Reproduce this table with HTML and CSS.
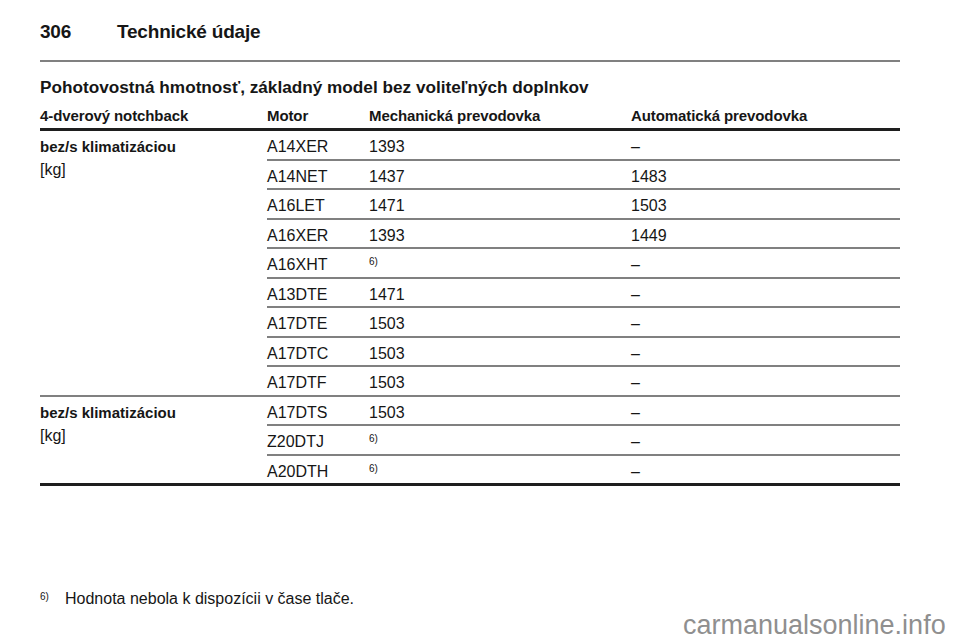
FILE: index.html
```html
<!DOCTYPE html>
<html lang="sk">
<head>
<meta charset="utf-8">
<title>306 Technické údaje</title>
<link rel="stylesheet" href="styles.css">
</head>
<body>
<div class="page">
  <header class="pagehead">
    <span class="pno">306</span>
    <span class="ptitle">Technické údaje</span>
  </header>
  <div class="rule"></div>
  <h2 class="section">Pohotovostná hmotnosť, základný model bez voliteľných doplnkov</h2>

  <div class="thead">
    <div>4-dverový notchback</div>
    <div>Motor</div>
    <div>Mechanická prevodovka</div>
    <div>Automatická prevodovka</div>
  </div>

  <div class="group">
    <div class="label"><div class="lb">bez/s klimatizáciou</div><div class="unit">[kg]</div></div>
    <div class="rows">
      <div class="row"><div>A14XER</div><div>1393</div><div>–</div></div>
      <div class="row"><div>A14NET</div><div>1437</div><div>1483</div></div>
      <div class="row"><div>A16LET</div><div>1471</div><div>1503</div></div>
      <div class="row"><div>A16XER</div><div>1393</div><div>1449</div></div>
      <div class="row"><div>A16XHT</div><div><sup class="fn">6)</sup></div><div>–</div></div>
      <div class="row"><div>A13DTE</div><div>1471</div><div>–</div></div>
      <div class="row"><div>A17DTE</div><div>1503</div><div>–</div></div>
      <div class="row"><div>A17DTC</div><div>1503</div><div>–</div></div>
      <div class="row"><div>A17DTF</div><div>1503</div><div>–</div></div>
    </div>
  </div>

  <div class="group last">
    <div class="label"><div class="lb">bez/s klimatizáciou</div><div class="unit">[kg]</div></div>
    <div class="rows">
      <div class="row"><div>A17DTS</div><div>1503</div><div>–</div></div>
      <div class="row"><div>Z20DTJ</div><div><sup class="fn">6)</sup></div><div>–</div></div>
      <div class="row"><div>A20DTH</div><div><sup class="fn">6)</sup></div><div>–</div></div>
    </div>
  </div>

  <div class="footnote">
    <sup class="fnmark">6)</sup>
    <span>Hodnota nebola k dispozícii v čase tlače.</span>
  </div>
</div>
<div class="watermark">carmanualsonline.info</div>
</body>
</html>
```

FILE: styles.css
```css
html, body {
  margin: 0;
  padding: 0;
  background: #ffffff;
}
body {
  font-family: "Liberation Sans", Arial, Helvetica, sans-serif;
  color: #161616;
  width: 960px;
  height: 642px;
  position: relative;
  overflow: hidden;
}
.page {
  padding-left: 40px;
  width: 860px;
}
.pagehead {
  display: flex;
  margin-top: 20px;
  height: 24px;
  line-height: 24px;
  font-size: 19px;
  font-weight: bold;
  letter-spacing: -0.2px;
}
.pno {
  width: 77px;
}
.rule {
  margin-top: 16px;
  height: 2px;
  background: #808080;
}
.section {
  margin: 14px 0 0 0;
  font-size: 17.2px;
  line-height: 22px;
  font-weight: bold;
}
.thead,
.row {
  display: grid;
  line-height: 18px;
}
.thead {
  grid-template-columns: 227px 102px 262px 1fr;
  margin-top: 9px;
  padding-bottom: 3px;
  border-bottom: 3px solid #1e1e1e;
  font-size: 15px;
  font-weight: bold;
  letter-spacing: -0.1px;
}
.group {
  display: flex;
  border-bottom: 2px solid #808080;
}
.group.last {
  border-bottom: 3px solid #1e1e1e;
}
.label {
  width: 227px;
  padding-top: 7px;
  line-height: 18px;
}
.lb {
  font-size: 15px;
  font-weight: bold;
}
.unit {
  margin-top: 5px;
  font-size: 16px;
}
.rows {
  flex: 1;
}
.row {
  grid-template-columns: 102px 262px 1fr;
  font-size: 16px;
  align-content: start;
  padding-top: 7px;
  height: 20.5px;
  border-bottom: 2px solid #808080;
}
.row:last-child {
  border-bottom: none;
}
.fn {
  font-size: 10px;
  line-height: 10px;
  vertical-align: 5px;
}
.footnote {
  margin-top: 104px;
  display: flex;
  font-size: 16px;
  line-height: 18px;
}
.fnmark {
  width: 25px;
  font-size: 10px;
  line-height: 10px;
  vertical-align: 0;
  position: relative;
  top: 2px;
}
.watermark {
  position: absolute;
  left: 683px;
  top: 610px;
  font-size: 27px;
  line-height: 30px;
  color: #8f8f8f;
}
```
